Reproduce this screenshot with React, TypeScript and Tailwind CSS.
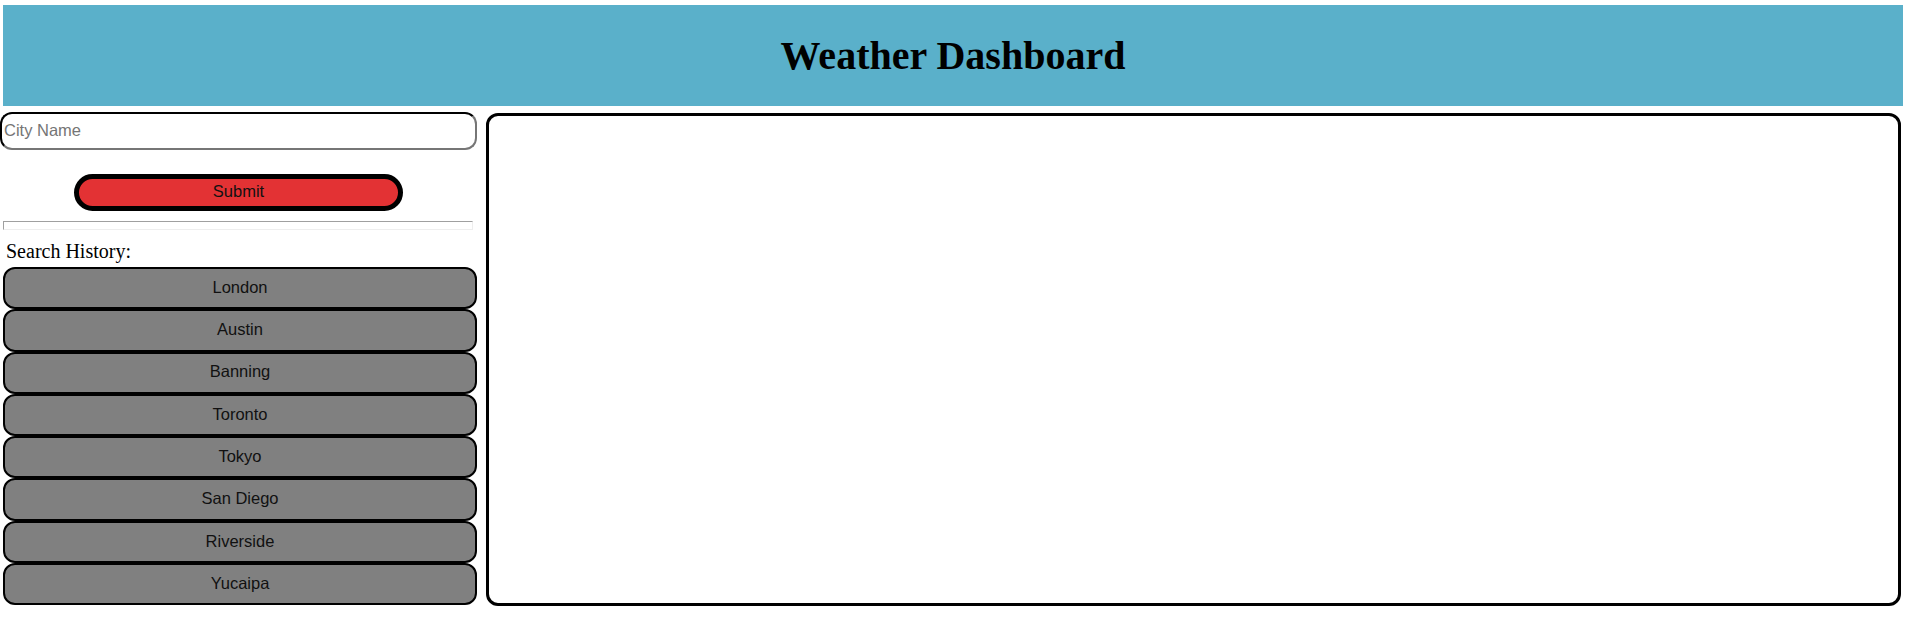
import React from 'react';

const history = ['London', 'Austin', 'Banning', 'Toronto', 'Tokyo', 'San Diego', 'Riverside', 'Yucaipa'];

const App: React.FC = () => {
  return (
    <div className="pt-[5px] bg-white min-h-[620px] font-['Liberation_Serif',serif] text-black">
      <header className="ml-[3px] w-[1900px] h-[101px] bg-[#5ab0ca] flex items-center justify-center">
        <h1 className="text-[40px] font-bold leading-none">Weather Dashboard</h1>
      </header>

      <div className="flex items-start mt-[6px]">
        {/* search column */}
        <aside className="w-[477px] flex flex-col font-['Liberation_Sans',Arial,sans-serif]">
          <input
            type="text"
            placeholder="City Name"
            className="w-[477px] h-[38px] px-[2px] pb-[2px] text-[16.5px] rounded-[12px] border-2 border-t-black border-l-black border-b-[#767676] border-r-[#767676] placeholder:text-[#757575] outline-none"
          />
          <button className="mt-[24px] mx-auto w-[329px] h-[37px] pb-[3px] rounded-full border-[5px] border-black bg-[#e33234] text-[16.5px] leading-none text-[#111]">
            Submit
          </button>
          <div className="mt-[10px] ml-[3px] w-[470px] h-[9px] border border-t-[#a0a0a0] border-l-[#a0a0a0] border-b-[#eeeeee] border-r-[#eeeeee]"></div>
          <p className="mt-[10px] pl-[6px] h-[23px] text-[20px] leading-[23px] font-['Liberation_Serif',serif]">Search History:</p>
          <div className="mt-[4px] ml-[3px] flex flex-col">
            {history.map((city) => (
              <button
                key={city}
                className="w-[474px] h-[42.3px] pb-[2px] rounded-[12px] border-2 border-black bg-[#808080] text-[16.5px] leading-none text-[#111]"
              >
                {city}
              </button>
            ))}
          </div>
        </aside>

        {/* forecast panel */}
        <main className="ml-[9px] mt-[1px] w-[1415px] h-[493px] border-[3px] border-black rounded-[12px]"></main>
      </div>
    </div>
  );
};

export default App;
